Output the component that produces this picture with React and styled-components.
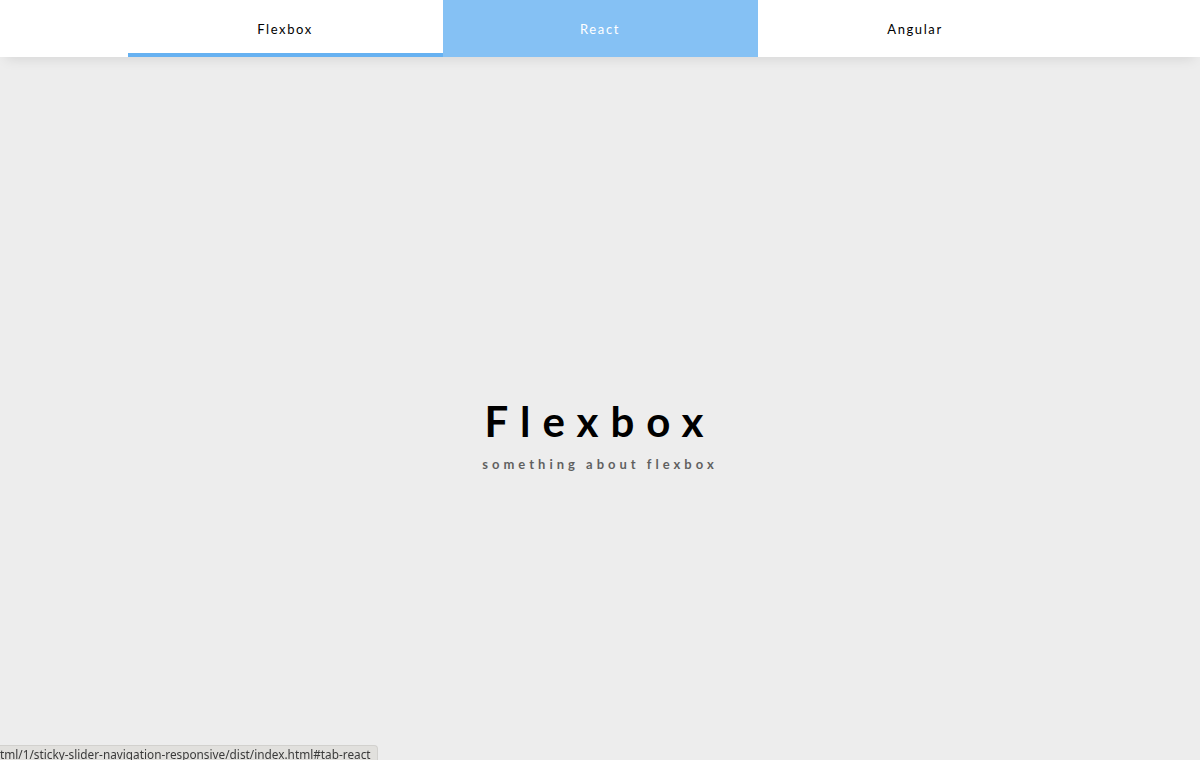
import React from 'react';
import styled, { createGlobalStyle, css } from 'styled-components';

const GlobalStyle = createGlobalStyle`
  html, body {
    margin: 0;
    padding: 0;
    height: 100%;
    background: #ededed;
    font-family: Lato, 'Liberation Sans', sans-serif;
    overflow: hidden;
  }
  #root {
    height: 100%;
  }
`;

const Page = styled.div`
  height: 100vh;
  display: flex;
  flex-direction: column;
`;

const TabsBar = styled.nav`
  display: flex;
  justify-content: center;
  height: 57px;
  flex-shrink: 0;
  background: #fff;
  box-shadow: 0 8px 12px -6px rgba(0, 0, 0, 0.1);
  position: relative;
  z-index: 1;
`;

const Tab = styled.a`
  position: relative;
  width: 315px;
  display: flex;
  justify-content: center;
  align-items: center;
  color: #000;
  font-size: 13px;
  letter-spacing: 0.1rem;
  text-decoration: none;
  ${(p) =>
    p.hover &&
    css`
      color: #fff;
      background: rgba(102, 177, 241, 0.8);
    `}
  ${(p) =>
    p.active &&
    css`
      &::after {
        content: '';
        position: absolute;
        left: 0;
        right: 0;
        bottom: 0;
        height: 4px;
        background: #66b1f1;
      }
    `}
`;

const Slide = styled.section`
  flex: 1;
  display: flex;
  flex-direction: column;
  align-items: center;
  justify-content: center;
  padding-top: 50px;
  text-align: center;
`;

const Title = styled.h1`
  margin: 0;
  font-size: 42px;
  font-weight: 700;
  letter-spacing: 12px;
  color: #000;
`;

const Subtitle = styled.h3`
  margin: 10px 0 0;
  font-size: 13px;
  font-weight: 700;
  letter-spacing: 4px;
  opacity: 0.6;
  color: #000;
`;

const StatusBubble = styled.div`
  position: fixed;
  left: 0;
  bottom: 0;
  height: 14px;
  padding-right: 6px;
  background: #e1e0dd;
  border-top-right-radius: 4px;
  border-top: 1px solid #d2d1ce;
  border-right: 1px solid #d2d1ce;
  color: #3a3a3a;
  font-family: 'Noto Sans', 'DejaVu Sans', sans-serif;
  font-size: 11.8px;
  line-height: 16px;
  white-space: nowrap;
`;

const tabs = [
  { id: 'flexbox', label: 'Flexbox', active: true },
  { id: 'react', label: 'React', hover: true },
  { id: 'angular', label: 'Angular' },
];

export default function App() {
  return (
    <Page>
      <GlobalStyle />
      <TabsBar>
        {tabs.map((t) => (
          <Tab key={t.id} href={`#tab-${t.id}`} active={t.active} hover={t.hover}>
            {t.label}
          </Tab>
        ))}
      </TabsBar>
      <Slide id="tab-flexbox">
        <Title>Flexbox</Title>
        <Subtitle>something about flexbox</Subtitle>
      </Slide>
      <StatusBubble>tml/1/sticky-slider-navigation-responsive/dist/index.html#tab-react</StatusBubble>
    </Page>
  );
}
